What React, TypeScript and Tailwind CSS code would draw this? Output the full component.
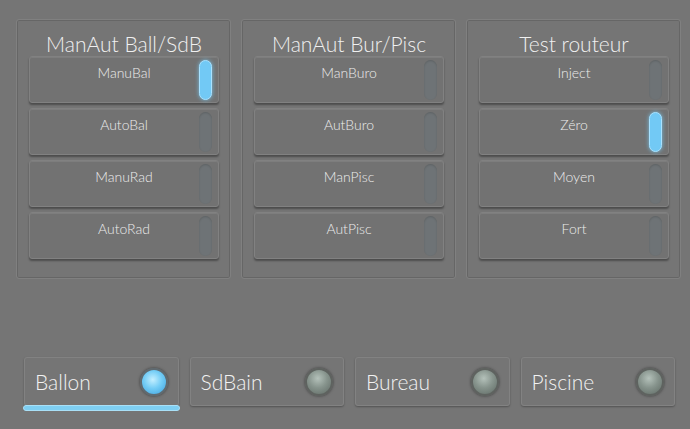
import React from 'react';

type Group = { title: string; items: string[]; active: number };

const groups: Group[] = [
  { title: 'ManAut Ball/SdB', items: ['ManuBal', 'AutoBal', 'ManuRad', 'AutoRad'], active: 0 },
  { title: 'ManAut Bur/Pisc', items: ['ManBuro', 'AutBuro', 'ManPisc', 'AutPisc'], active: -1 },
  { title: 'Test routeur', items: ['Inject', 'Zéro', 'Moyen', 'Fort'], active: 1 },
];

const zones = [
  { name: 'Ballon', on: true },
  { name: 'SdBain', on: false },
  { name: 'Bureau', on: false },
  { name: 'Piscine', on: false },
];

const ToggleRow: React.FC<{ label: string; on: boolean }> = ({ label, on }) => (
  <div className="relative h-[47px] rounded-[3px] bg-[#727272] border border-[#818181] shadow-[0_2px_2px_rgba(0,0,0,0.35),inset_0_1px_0_rgba(255,255,255,0.08)]">
    <div className="pt-[7px] text-center text-[14px] leading-[18px] font-light text-[#ececec]">{label}</div>
    <div
      className={
        on
          ? 'absolute right-[6px] top-[3px] bottom-[2px] w-[13px] rounded-full bg-[#72c9f5] border border-[#a9e2ff] shadow-[0_0_4px_rgba(120,210,255,0.8)]'
          : 'absolute right-[6px] top-[3px] bottom-[2px] w-[13px] rounded-full bg-[#6e7376] shadow-[inset_0_1px_2px_rgba(0,0,0,0.15)]'
      }
    />
  </div>
);

const Led: React.FC<{ on: boolean }> = ({ on }) => (
  <div
    className={
      on
        ? 'w-[28px] h-[28px] rounded-full border-2 border-[#5f6a70] bg-[radial-gradient(circle_at_45%_40%,#c4efff_0%,#74cdf6_45%,#3b9fdc_100%)] shadow-[0_0_3px_rgba(0,0,0,0.5)]'
        : 'w-[28px] h-[28px] rounded-full border-2 border-[#5e625f] bg-[radial-gradient(circle_at_45%_35%,#b4c1ba_0%,#87948d_45%,#5f6a64_100%)] shadow-[0_0_3px_rgba(0,0,0,0.5)]'
    }
  />
);

const App: React.FC = () => {
  return (
    <div
      className="w-[690px] h-[429px] bg-[#757575] overflow-hidden"
      style={{ fontFamily: 'Lato, "DejaVu Sans", sans-serif' }}
    >
      <div className="grid grid-cols-3 gap-[10px] pl-[16px] pr-[9px] pt-[19px]">
        {groups.map((g) => (
          <div
            key={g.title}
            className="h-[260px] rounded-[3px] border border-[#808080] shadow-[inset_0_0_0_1px_rgba(0,0,0,0.12)] pt-[11px] pl-[12px] pr-[11px]"
          >
            <div className="text-center text-[21px] leading-[25px] font-light text-[#f0f0f0]">{g.title}</div>
            <div className="flex flex-col gap-[5px]">
              {g.items.map((it, i) => (
                <ToggleRow key={it} label={it} on={i === g.active} />
              ))}
            </div>
          </div>
        ))}
      </div>

      <div className="grid grid-cols-4 gap-[11px] ml-[24px] mr-[15px] mt-[78px]">
        {zones.map((z) => (
          <div key={z.name} className="relative">
            <div className="h-[49px] rounded-[3px] border border-[#828282] shadow-[0_1px_2px_rgba(0,0,0,0.3)] flex items-center justify-between pl-[10px] pr-[10px]">
              <span className="text-[21px] leading-[24px] font-light text-[#f2f2f2]">{z.name}</span>
              <Led on={z.on} />
            </div>
            {z.on && (
              <div className="absolute left-[-1px] right-[-1px] top-[48px] h-[6px] rounded-full bg-[#7fcff2] border border-[#a9e0f7]" />
            )}
          </div>
        ))}
      </div>
    </div>
  );
};

export default App;
